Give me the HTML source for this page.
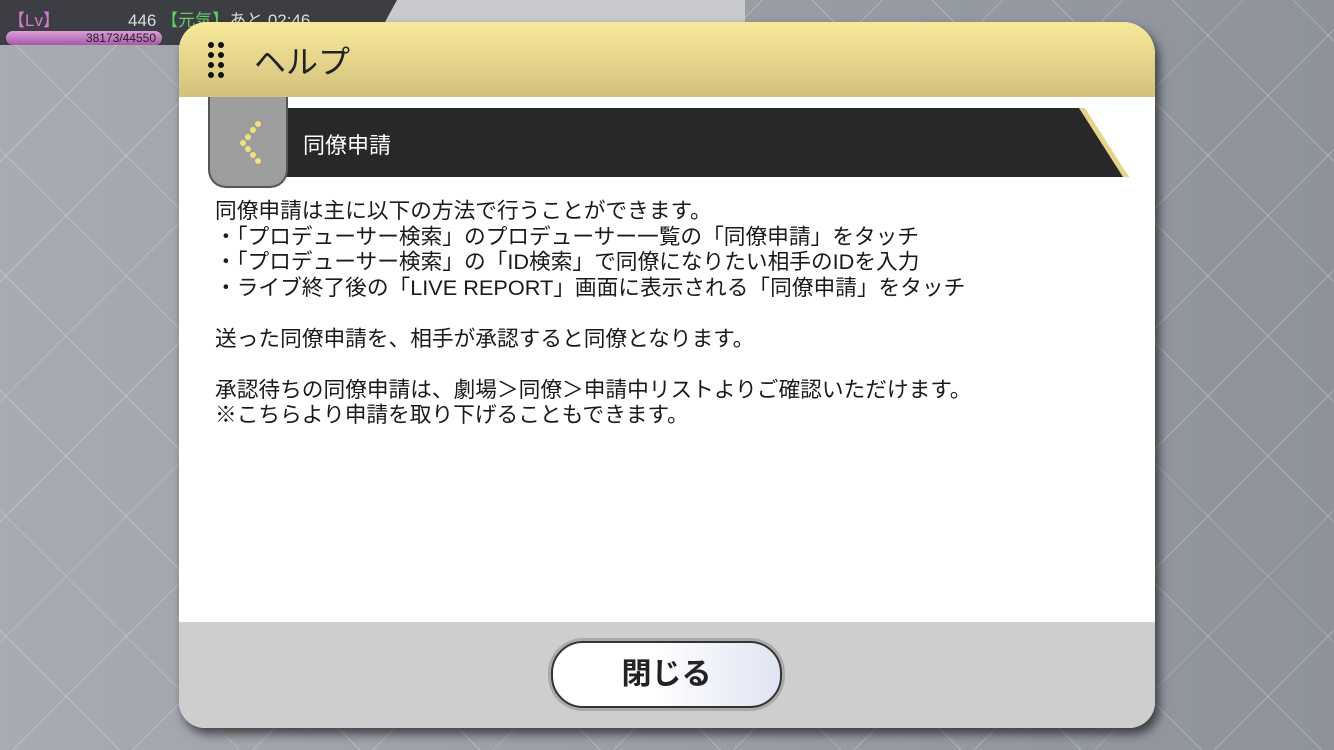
<!DOCTYPE html>
<html><head><meta charset="utf-8"><style>
body{margin:0;width:1334px;height:750px;overflow:hidden;background:#9a9ea6;font-family:"Liberation Sans","Noto Sans CJK JP",sans-serif;position:relative}
.bg{position:absolute;inset:0;background:
repeating-linear-gradient(45deg,transparent 0 84px,rgba(255,255,255,.25) 84px 85px),
repeating-linear-gradient(-45deg,transparent 0 84px,rgba(255,255,255,.25) 84px 85px),
linear-gradient(90deg,#a8abb1,#9ca0a7 40%,#959aa2 70%,#8e939b)}
.top{position:absolute;left:0;top:0;width:400px;height:45px;background:#3d3d44;clip-path:polygon(0 0,400px 0,370px 45px,0 45px)}
.top2{position:absolute;left:385px;top:0;width:360px;height:22px;background:#c9cacd;clip-path:polygon(12px 0,360px 0,360px 22px,0 22px)}
.dlg{position:absolute;left:179px;top:22px;width:976px;height:706px;border-radius:28px 32px 26px 26px;overflow:hidden;box-shadow:4px 6px 10px rgba(0,0,0,.6);background:#fff}
.hd{position:absolute;left:0;top:0;width:100%;height:75px;background:linear-gradient(#f8e99a,#d3c17c)}
.hd span{position:absolute;left:75px;top:15px;font-size:32px;color:#222}
.dots{position:absolute;left:29px;top:20px;width:20px;height:40px}
.dots i{position:absolute;width:6px;height:6px;border-radius:50%;background:#111}
.ban{position:absolute;left:100px;top:86px;width:850px;height:69px;background:#282828;clip-path:polygon(0 0,800px 0,850px 69px,0 69px)}
.gold{position:absolute;left:100px;top:86px;width:850px;height:69px;background:#e6d48a;clip-path:polygon(800px 0,806px 0,850px 69px,844px 69px)}
.ban span{position:absolute;left:24px;top:20px;color:#fff;font-size:22px}
.tab{position:absolute;left:29px;top:75px;width:76px;height:89px;background:#9d9d9d;border:2px solid #555;border-top:none;border-radius:0 0 18px 18px}
.txt{position:absolute;left:36px;top:176px;font-size:21.7px;line-height:25.5px;color:#1a1a1a;white-space:pre}
.ft{position:absolute;left:0;top:600px;width:100%;height:106px;background:#cecece}
.btn{position:absolute;left:372px;top:19px;width:227px;height:63px;border-radius:32px;border:2px solid #333;box-shadow:0 0 0 3px #aaa;background:linear-gradient(90deg,#fff 45%,#e0e4f3);text-align:center;line-height:63px;font-size:30px;font-weight:bold;color:#222}
</style></head><body>
<div class="bg"></div>
<div class="top"></div><div class="top2"></div>
<div style="position:absolute;left:8px;top:6px;color:#d07ad0;font-size:17px">【Lv】</div>
<div style="position:absolute;left:128px;top:6px;color:#ddd;font-size:17px">446 <span style="color:#6c6">【元気】</span>あと 02:46</div>
<div style="position:absolute;left:6px;top:31px;width:156px;height:14px;border-radius:7px;background:linear-gradient(#d9a0d9,#a85aa8);font-size:12px;text-align:right;color:#222;line-height:14px;padding-right:6px;box-sizing:border-box">38173/44550</div>
<div class="dlg">
<div class="hd"><div class="dots"><i style="left:0;top:0"></i><i style="left:10px;top:0"></i><i style="left:0;top:10px"></i><i style="left:10px;top:10px"></i><i style="left:0;top:20px"></i><i style="left:10px;top:20px"></i><i style="left:0;top:30px"></i><i style="left:10px;top:30px"></i></div><span>ヘルプ</span></div>
<div class="ban"><span style="left:24px">同僚申請</span></div>
<div class="gold"></div>
<div class="tab"><svg width="76" height="89"><g fill="#f0e27a"><circle cx="48" cy="27" r="3"/><circle cx="43" cy="33" r="3"/><circle cx="38" cy="40" r="3"/><circle cx="33" cy="46" r="3"/><circle cx="38" cy="52" r="3"/><circle cx="43" cy="58" r="3"/><circle cx="48" cy="64" r="3"/></g></svg></div>
<div class="txt">同僚申請は主に以下の方法で行うことができます。
・「プロデューサー検索」のプロデューサー一覧の「同僚申請」をタッチ
・「プロデューサー検索」の「ID検索」で同僚になりたい相手のIDを入力
・ライブ終了後の「LIVE REPORT」画面に表示される「同僚申請」をタッチ

送った同僚申請を、相手が承認すると同僚となります。

承認待ちの同僚申請は、劇場＞同僚＞申請中リストよりご確認いただけます。
※こちらより申請を取り下げることもできます。</div>
<div class="ft"><div class="btn">閉じる</div></div>
</div>
</body></html>
